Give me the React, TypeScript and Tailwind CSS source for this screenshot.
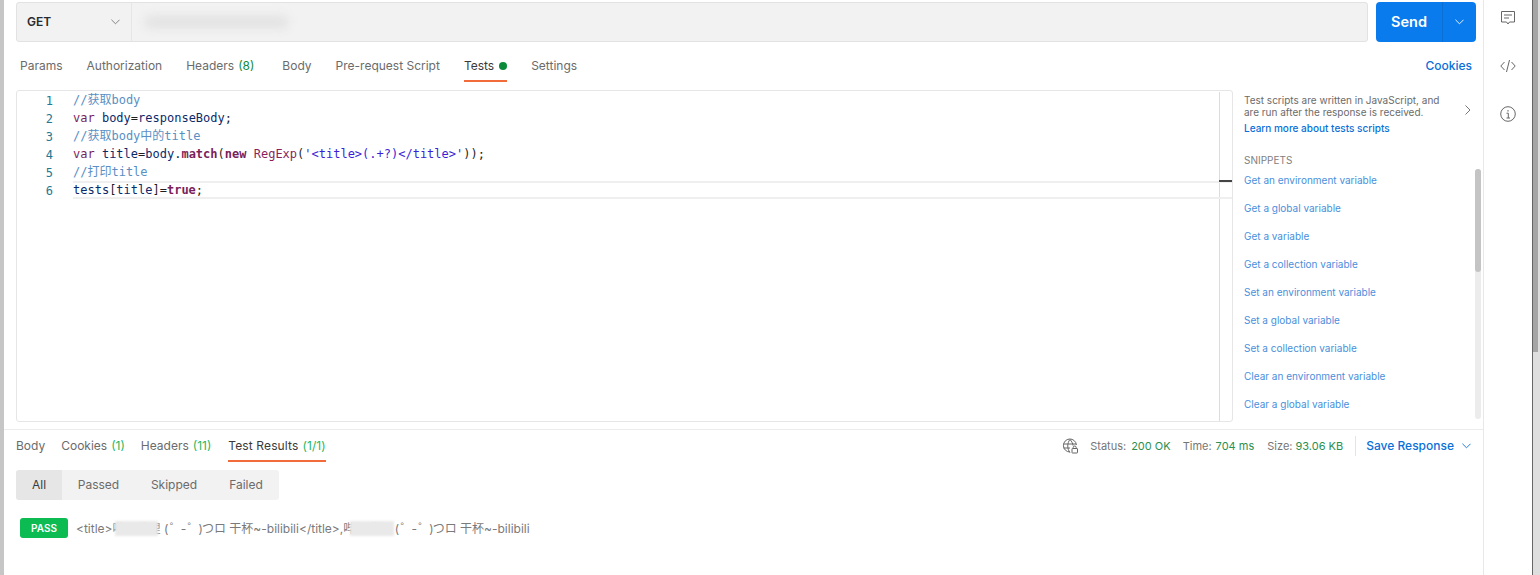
import React from "react";

const mono = "font-['DejaVu_Sans_Mono','Noto_Sans_CJK_SC',monospace]";
const snippets = [
  "Get an environment variable",
  "Get a global variable",
  "Get a variable",
  "Get a collection variable",
  "Set an environment variable",
  "Set a global variable",
  "Set a collection variable",
  "Clear an environment variable",
  "Clear a global variable",
];

function Chevron({ className = "" }: { className?: string }) {
  return (
    <svg viewBox="0 0 10 6" className={className} fill="none" stroke="currentColor" strokeWidth="1">
      <path d="M0.5 0.5 5 5 9.5 0.5" />
    </svg>
  );
}

function Tab({ label, count, active, dot, countClass = "text-[#0f8a3c]", className = "" }: { label: string; count?: string; active?: boolean; dot?: boolean; countClass?: string; className?: string }) {
  return (
    <div className={`relative flex items-center h-full ${active ? "text-[#3a3a3a]" : "text-[#6b6b6b]"} ${className}`}>
      <span>{label}</span>
      {count && <span className={`ml-1 ${countClass}`}>{count}</span>}
      {dot && <span className="ml-[5px] w-2 h-2 rounded-full bg-[#0b8a3a]" />}
      {active && <span className="absolute left-0 right-0 bottom-0 h-[2px] bg-[#f26b3a]" />}
    </div>
  );
}

const L = ({ n, children }: { n: number; children: React.ReactNode }) => (
  <div className="flex h-[18px] items-center">
    <div className="w-[36px] text-right text-[#237893] shrink-0">{n}</div>
    <div className="ml-[20px] flex-1 h-[18px] leading-[17px] whitespace-pre">{children}</div>
  </div>
);

const C = "text-[#5a8fc4]";
const K = "text-[#7a1f5c]";
const B = "text-[#0b2a6b]";

const Masked = ({ children, mask }: { children: React.ReactNode; mask: string }) => (
  <span className="relative">
    {children}
    <span className={`absolute top-0 bottom-0 bg-[#e9e9e9] blur-[1px] ${mask}`} />
  </span>
);

const Kao = () => (
  <>
    <span className="tracking-[-1px]">{"( ゜- ゜)"}</span>
    {"つロ 干杯~-bilibili"}
  </>
);

export default function App() {
  return (
    <div className="w-[1540px] h-[575px] overflow-hidden bg-white flex font-['Inter',sans-serif]">
      <div className="w-[4px] bg-[#c6c6c6] shrink-0" />
      <div className="w-[1480px] shrink-0 flex flex-col border-r border-[#e8e8e8]">
        <div className="flex h-[43px] pl-[12px] pr-[7px] pt-[2px] pb-[1px] gap-2">
          <div className="flex-1 flex bg-[#f2f2f2] border border-[#e2e2e2] rounded-[3px]">
            <div className="w-[115px] flex items-center justify-between pl-[10px] pr-[10px] text-[12px] font-semibold text-[#2b2b2b] border-r border-[#e6e6e6]">
              <span>GET</span>
              <Chevron className="w-[9px] h-[6px] text-[#777] mr-[1px]" />
            </div>
            <div className="flex-1 flex items-center pl-[12px]">
              <div className="w-[145px] h-[14px] bg-[#e4e4e4] rounded-full blur-[4px]" />
            </div>
          </div>
          <div className="w-[100px] flex bg-[#097bed] rounded-[4px] text-white">
            <div className="w-[67px] flex items-center justify-center text-[14.5px] font-semibold border-r border-[#0a6fd4]">Send</div>
            <div className="flex-1 flex items-center justify-center">
              <Chevron className="w-[9px] h-[6px]" />
            </div>
          </div>
        </div>

        <div className="flex items-center h-[47px] pl-[16px] pr-[11px] pb-[8px] pt-[7px] text-[12px]">
          <div className="flex items-center gap-[24px] h-[32px]">
            <Tab label="Params" />
            <Tab label="Authorization" />
            <Tab label="Headers" count="(8)" className="mr-[4px]" />
            <Tab label="Body" />
            <Tab label="Pre-request Script" />
            <Tab label="Tests" dot active />
            <Tab label="Settings" />
          </div>
          <span className="ml-auto text-[12px] font-medium text-[#0a6fd8]">Cookies</span>
        </div>

        <div className="flex h-[332px] ml-[12px]">
          <div className="w-[1217px] shrink-0 border border-[#e6e6e6] rounded-[3px] flex relative pt-[1px]">
            <div className={`flex-1 text-[12px] ${mono} text-[#1f1f1f]`}>
              <L n={1}><span className={C}>//获取body</span></L>
              <L n={2}><span className={K}>var</span> <span className={B}>body</span>=<span className={B}>responseBody</span>;</L>
              <L n={3}><span className={C}>//获取body中的title</span></L>
              <L n={4}><span className={K}>var</span> <span className={B}>title</span>=<span className={B}>body</span>.<span className={`${K} font-bold`}>match</span>(<span className={`${K} font-bold`}>new</span> <span className="text-[#8a1f5c]">RegExp</span>(<span className="text-[#3b1fd8]">{"'<title>(.+?)</title>'"}</span>));</L>
              <L n={5}><span className={C}>//打印title</span></L>
              <L n={6}><span className={B}>tests</span>[<span className={B}>title</span>]=<span className={`${K} font-bold`}>true</span>;</L>
            </div>
            <div className="w-[13px] shrink-0 border-l border-[#dcdcdc]" />
            <div className="absolute left-[56px] right-0 top-[90px] h-[18px] border-y-2 border-[#efefef]" />
            <div className="absolute right-0 w-[13px] top-[89px] h-[2px] bg-[#444]" />
          </div>

          <div className="flex-1 relative pl-[11px] pr-[9px] overflow-hidden">
            <div className="flex mt-[4px]">
              <div className="w-[205px] text-[10px] leading-[12px] text-[#6b6b6b]">
                <div>Test scripts are written in JavaScript, and are run after the response is received.</div>
                <div className="mt-[4px] font-medium text-[#0a6fd8]">Learn more about tests scripts</div>
              </div>
              <svg viewBox="0 0 6 10" className="w-[6px] h-[10px] ml-[16px] mt-[11px] text-[#777]" fill="none" stroke="currentColor"><path d="M.5.5 5 5 .5 9.5" /></svg>
            </div>
            <div className="mt-[19px] text-[10px] text-[#808080] leading-[14px]">SNIPPETS</div>
            <div className="mt-[6px] flex flex-col gap-[14px] text-[10px] leading-[14px] text-[#4a8fdc]">
              {snippets.map((s) => <div key={s}>{s}</div>)}
            </div>
            <div className="absolute right-[2px] top-[79px] w-[6px] bottom-[3px] bg-[#ececec] rounded-full">
              <div className="h-[103px] bg-[#c4c4c4] rounded-full" />
            </div>
          </div>
        </div>

        <div className="mt-[7px] border-t border-[#ececec] flex items-center h-[32px] pl-[12px] pr-[12px] text-[12px] relative">
          <div className="flex items-center gap-[16px] h-[32px]">
            <Tab label="Body" />
            <Tab label="Cookies" count="(1)" countClass="text-[#27b75e]" />
            <Tab label="Headers" count="(11)" countClass="text-[#27b75e]" className="mr-[1px]" />
            <Tab label="Test Results" count="(1/1)" countClass="text-[#27b75e]" active className="tracking-[0.01em]" />
          </div>
          <div className="ml-auto flex items-center text-[11px] text-[#757575]">
            <svg viewBox="0 0 16 16" className="w-[16px] h-[16px] mr-[12px] text-[#666]" fill="none" stroke="currentColor" strokeWidth="1">
              <path d="M8 14A6.5 6.5 0 1 1 14.4 7M1.6 6h12.6M1.6 10H8M8 1.5C5 5 5 11 8 14.5M8 1.5c2 2.2 2.9 4.3 3 6" />
              <rect x="10" y="10.5" width="5.5" height="4.5" rx=".5" fill="white" />
              <path d="M11.2 10.5V9.5a1.5 1.5 0 0 1 3 0v1" />
            </svg>
            <div className="flex items-center pt-[1px]">
              <span>Status:</span><span className="ml-[5px] text-[#2b8f4f]">200 OK</span>
              <span className="ml-[12px]">Time:</span><span className="ml-[4px] text-[#2b8f4f]">704 ms</span>
              <span className="ml-[13px]">Size:</span><span className="ml-[3px] text-[#2b8f4f]">93.06 KB</span>
            </div>
            <span className="ml-[12px] h-[20px] w-px bg-[#e4e4e4]" />
            <span className="ml-[10px] text-[12px] font-medium text-[#0a6fd8]">Save Response</span>
            <Chevron className="ml-[8px] w-[9px] h-[6px] text-[#0a6fd8]" />
          </div>
        </div>

        <div className="ml-[12px] mt-[9px] w-[263px] h-[30px] flex bg-[#f2f2f2] rounded-[3px] text-[12px] text-[#6b6b6b]">
          <div className="w-[46px] flex items-center justify-center bg-[#e6e6e6] text-[#3a3a3a] rounded-l-[3px]">All</div>
          <div className="w-[73px] flex items-center justify-center">Passed</div>
          <div className="w-[78px] flex items-center justify-center">Skipped</div>
          <div className="w-[66px] flex items-center justify-center">Failed</div>
        </div>

        <div className="ml-[16px] mt-[18px] flex items-center">
          <span className="w-[48px] h-[20px] flex items-center justify-center rounded-[3px] bg-[#0cbb52] text-white text-[10px] font-semibold">PASS</span>
          <div className="ml-[8px] pt-[1px] text-[12px] text-[#7a7a7a] whitespace-pre font-['Inter','Noto_Sans_CJK_JP',sans-serif]">
            {"<title>"}<Masked mask="left-[2px] right-[3px]">哔哩哔哩</Masked>{" "}<Kao />{"</title>,"}<Masked mask="left-[7px] right-[-3px]">哔哩哔哩</Masked>{" "}<Kao />
          </div>
        </div>
      </div>

      <div className="w-[48px] shrink-0 flex flex-col items-center pt-[10px] gap-[32px] text-[#666]">
        <svg viewBox="0 0 16 16" className="w-[16px] h-[16px]" fill="none" stroke="currentColor"><path d="M1.5 1.5h13v10.5h-5L8 14l-1.5-2h-5zM4 5h8M4 8h5" /></svg>
        <svg viewBox="0 0 16 16" className="w-[16px] h-[16px]" fill="none" stroke="currentColor"><path d="M4.5 4 .8 8l3.7 4M11.5 4l3.7 4-3.7 4M9.5 2 6.5 14" /></svg>
        <svg viewBox="0 0 16 16" className="w-[16px] h-[16px]" fill="none" stroke="currentColor"><circle cx="8" cy="8" r="7.3" /><path d="M6.5 7.2H8.3V12M6.5 12h3.5M8 4v1.6" /></svg>
      </div>
      <div className="flex-1 bg-[#dedede] border-l border-[#666]">
        <div className="w-[5px] h-[352px] bg-[#a6a6a6]" />
      </div>
    </div>
  );
}
